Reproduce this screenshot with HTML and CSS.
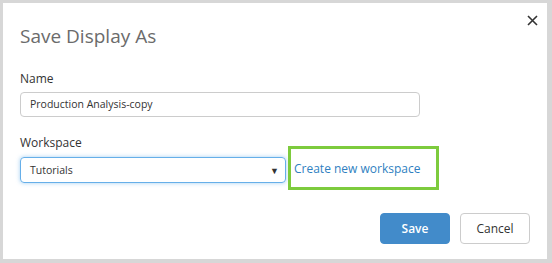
FILE: index.html
```html
<!DOCTYPE html>
<html lang="en">
<head>
    <meta charset="UTF-8">
    <title>Save Display As</title>
    <link rel="stylesheet" href="styles.css">
</head>
<body>
    <div class="modal">
        <button class="close-btn" aria-label="Close">
            <svg width="11" height="11" viewBox="0 0 11 11"><path d="M1 1L10 10M10 1L1 10" stroke="#333" stroke-width="1.6"/></svg>
        </button>
        <div class="modal-title">Save Display As</div>

        <div class="field">
            <label class="field-label">Name</label>
            <div class="text-input">Production Analysis-copy</div>
        </div>

        <div class="field">
            <label class="field-label">Workspace</label>
            <div class="workspace-row">
                <div class="select-box">
                    <span>Tutorials</span>
                    <span class="caret">&#9660;</span>
                </div>
                <a class="create-link" href="#">Create new workspace</a>
            </div>
        </div>

        <div class="modal-footer">
            <button class="btn btn-primary">Save</button>
            <button class="btn btn-default">Cancel</button>
        </div>
    </div>
</body>
</html>
```

FILE: styles.css
```css
html, body {
    margin: 0;
    height: 100%;
}

body {
    background: #d7d7d7;
    padding: 3px 5px 4px 3px;
    box-sizing: border-box;
    font-family: "Open Sans", sans-serif;
    color: #333;
}

.modal {
    position: relative;
    background: #fff;
    height: 256px;
    padding: 0 17px 0 17px;
    box-sizing: border-box;
}

.close-btn {
    position: absolute;
    top: 11px;
    right: 9px;
    border: none;
    background: none;
    padding: 0;
    width: 11px;
    height: 11px;
    cursor: pointer;
}

.modal-title {
    font-size: 19px;
    color: #6b6b6b;
    padding-top: 20px;
    line-height: 26px;
    margin-bottom: 22px;
}

.field {
    margin-bottom: 18px;
}

.field-label {
    display: block;
    font-size: 12px;
    line-height: 16px;
    margin-bottom: 5px;
}

.text-input {
    width: 400px;
    height: 25px;
    box-sizing: border-box;
    border: 1px solid #ccc;
    border-radius: 4px;
    font-size: 10.5px;
    line-height: 23px;
    padding: 0 9px;
}

.workspace-row {
    display: flex;
    align-items: center;
    margin-top: -10px;
}

.select-box {
    width: 266px;
    height: 26px;
    box-sizing: border-box;
    border: 1px solid #66afe9;
    border-radius: 4px;
    box-shadow: 0 0 4px rgba(102, 175, 233, 0.6);
    display: flex;
    align-items: center;
    justify-content: space-between;
    font-size: 10.5px;
    padding: 0 6px 0 9px;
    margin-top: 4px;
}

.caret {
    font-size: 9px;
    color: #333;
}

.create-link {
    margin-left: 2px;
    border: 3px solid #7dcb3d;
    height: 44px;
    width: 151px;
    box-sizing: border-box;
    display: flex;
    align-items: center;
    padding-left: 3px;
    font-size: 12px;
    color: #2f7fc1;
    text-decoration: none;
}

.modal-footer {
    display: flex;
    justify-content: flex-end;
    gap: 10px;
    margin-top: 23px;
}

.btn {
    height: 31px;
    width: 70px;
    border-radius: 4px;
    font-family: "Open Sans", sans-serif;
    font-size: 12px;
    cursor: pointer;
}

.btn-primary {
    background: #428bca;
    border: 1px solid #428bca;
    color: #fff;
    font-weight: 600;
}

.btn-default {
    background: #fff;
    border: 1px solid #ccc;
    color: #333;
}
```
